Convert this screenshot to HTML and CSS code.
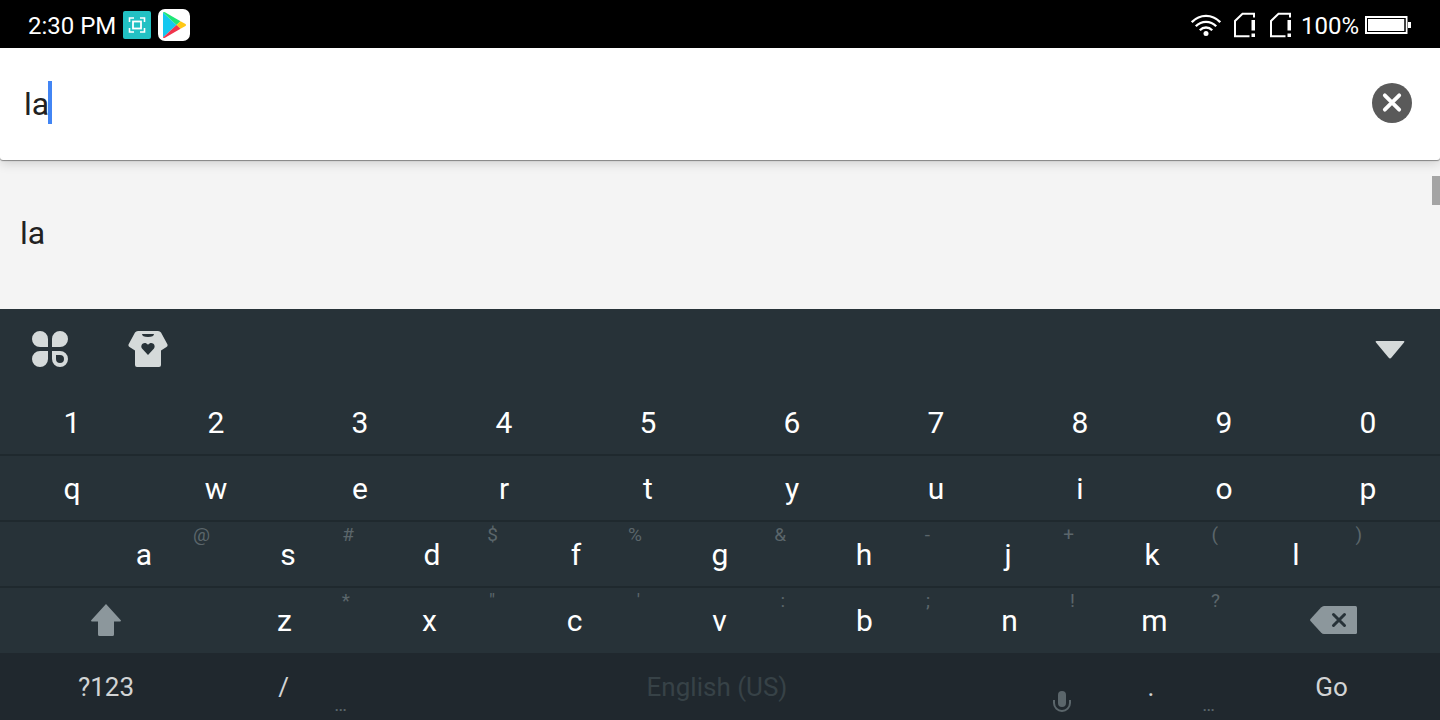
FILE: index.html
```html
<!DOCTYPE html>
<html lang="en">
<head>
<meta charset="utf-8">
<meta name="viewport" content="width=device-width, initial-scale=1">
<title>Search</title>
<link rel="stylesheet" href="styles.css">
</head>
<body>
<div class="screen">
  <header class="status">
    <div class="status-left">
      <span>2:30 PM</span>
      <svg width="28" height="28" viewBox="0 0 28 28" aria-hidden="true">
        <rect width="28" height="28" rx="2" fill="#22c1c3"/>
        <g fill="none" stroke="#fff" stroke-width="1.6"><path d="M6.5 11V7H11M17 7h4.500V11M21.500 17v4H17M11 21H6.500V17"/><rect x="10" y="10.500" width="8" height="7" stroke-width="1.800"/></g>
      </svg>
      <svg width="32" height="32" viewBox="0 0 32 32" aria-hidden="true">
        <rect width="32" height="32" rx="7" fill="#fff"/>
        <path d="M5 3.500V28.500L18.500 16Z" fill="#14c8f0"/>
        <path d="M5 3.500Q5.500 2.500 7 3.300L22.500 12.200L18.500 16Z" fill="#1ee676"/>
        <path d="M22.500 12.200L27.500 15Q28.800 16 27.500 17L22.500 19.800L18.500 16Z" fill="#ffc814"/>
        <path d="M5 28.500Q5.500 29.500 7 28.700L22.500 19.800L18.500 16Z" fill="#f0344c"/>
      </svg>
    </div>
    <div class="status-right">
      <svg width="30" height="24" viewBox="0 0 30 24" aria-hidden="true">
        <g fill="none" stroke="#fff" stroke-width="2.300"><path d="M.8 9.200C9 .8 21 .8 29.200 9.200"/><path d="M4.800 13.300C10.600 7.300 19.400 7.300 25.200 13.300"/><path d="M8.800 17.200C12.400 13.600 17.600 13.600 21.200 17.200"/></g>
        <circle cx="15" cy="20.500" r="2.500" fill="#fff"/>
      </svg>
      <svg width="24" height="26" viewBox="0 0 24 26" aria-hidden="true">
        <path d="M16.500 24.200H2V9L9.500 1.800H21V5.500" fill="none" stroke="#fff" stroke-width="2"/><path d="M18.500 8h3.500v10.500h-3.500zM18.500 21.500h3.500v3.500h-3.500z" fill="#fff"/>
      </svg>
      <svg width="24" height="26" viewBox="0 0 24 26" aria-hidden="true">
        <path d="M16.500 24.200H2V9L9.500 1.800H21V5.500" fill="none" stroke="#fff" stroke-width="2"/><path d="M18.500 8h3.500v10.500h-3.500zM18.500 21.500h3.500v3.500h-3.500z" fill="#fff"/>
      </svg>
      <span class="charge">100%
      <svg width="46" height="18" viewBox="0 0 46 18" aria-hidden="true">
        <rect x="1" y="1" width="40.500" height="16" fill="none" stroke="#fff" stroke-width="2"/><rect x="3" y="3" width="36.500" height="12" fill="#fff"/><rect x="2.500" y="2.500" width="37.500" height="13" fill="none" stroke="#000"/><path d="M43 6h3v6h-3z" fill="#fff"/>
      </svg></span>
    </div>
  </header>

  <div class="page">
    <form class="search">
      <input class="query" type="text" value="la" size="2" aria-label="Search">
      <span class="caret"></span>
      <button class="clear" type="reset" aria-label="Clear">
        <svg width="40" height="40" viewBox="0 0 40 40"><circle cx="20" cy="20" r="20" fill="#5a5a5a"/><path d="M12.800 12.300L27.200 26.700M27.200 12.300L12.800 26.700" stroke="#fff" stroke-width="3.800" stroke-linecap="round"/></svg>
      </button>
    </form>

    <main class="results">
      <button class="suggestion" type="button">la</button>
      <span class="scroll-thumb"></span>
    </main>
  </div>

  <section class="keyboard" aria-label="Keyboard">
    <div class="tools">
      <button type="button" aria-label="Menu">
        <svg width="36" height="36" viewBox="0 0 36 36" fill="#d5dada"><path d="M8 0a8 8 0 0 1 8 8v8H8A8 8 0 0 1 8 0zM28 0a8 8 0 0 1 0 16h-8V8a8 8 0 0 1 8-8zM8 20h8v8a8 8 0 1 1-8-8z"/><path fill-rule="evenodd" d="M20 20h8a8 8 0 1 1-8 8zM24 24v4a4 4 0 1 0 4-4z"/></svg>
      </button>
      <button type="button" aria-label="Themes">
        <svg width="40" height="36" viewBox="0 0 40 36"><path d="M10 0H30Q32 0 33 1.500L39.500 13.500Q40 15 38.500 16L33 19.500V34Q33 36 31 36H9Q7 36 7 34V19.500L1.500 16Q0 15 .5 13.500L7 1.500Q8 0 10 0Z" fill="#d5dada"/><path d="M14 3h12q0 3-6 3t-6-3zM20 24l-6-6.500c-2.500-3.500 2.500-8 6-3.700 3.500-4.300 8.500.2 6 3.700z" fill="#273238"/></svg>
      </button>
      <button class="collapse" type="button" aria-label="Hide keyboard">
        <svg width="30" height="18" viewBox="0 0 30 18"><path d="M1.500 0h27Q30 0 29 1.500L16.500 16.500Q15 18.500 13.500 16.500L1 1.500Q0 0 1.500 0z" fill="#d5dada"/></svg>
      </button>
    </div>

    <div class="row ten">
      <button type="button">1</button><button type="button">2</button><button type="button">3</button><button type="button">4</button><button type="button">5</button><button type="button">6</button><button type="button">7</button><button type="button">8</button><button type="button">9</button><button type="button">0</button>
    </div>
    <div class="row ten">
      <button type="button">q</button><button type="button">w</button><button type="button">e</button><button type="button">r</button><button type="button">t</button><button type="button">y</button><button type="button">u</button><button type="button">i</button><button type="button">o</button><button type="button">p</button>
    </div>
    <div class="row nine">
      <button type="button">a<span class="hint">@</span></button><button type="button">s<span class="hint">#</span></button><button type="button">d<span class="hint">$</span></button><button type="button">f<span class="hint">%</span></button><button type="button">g<span class="hint">&amp;</span></button><button type="button">h<span class="hint">-</span></button><button type="button">j<span class="hint">+</span></button><button type="button">k<span class="hint">(</span></button><button type="button">l<span class="hint">)</span></button>
    </div>
    <div class="row seven">
      <button type="button" aria-label="Shift"><svg width="30" height="32" viewBox="0 0 30 32"><path d="M15 0L30 16.500Q30 17.500 29 17.500H23V30.500Q23 32 21.500 32H8.500Q7 32 7 30.500V17.500H1Q0 17.500 0 16.500Z" fill="#8c979c"/></svg></button>
      <button type="button">z<span class="hint">*</span></button><button type="button">x<span class="hint">"</span></button><button type="button">c<span class="hint">'</span></button><button type="button">v<span class="hint">:</span></button><button type="button">b<span class="hint">;</span></button><button type="button">n<span class="hint">!</span></button><button type="button">m<span class="hint">?</span></button>
      <button type="button" aria-label="Backspace"><svg width="47" height="28" viewBox="0 0 47 28"><path d="M14 0H45.500Q47 0 47 1.500V26.500Q47 28 45.500 28H14Q12.500 28 11 26.500L.5 15Q-.3 14 .5 13L11 1.500Q12.500 0 14 0Z" fill="#8c979c"/><path d="M23.500 8.500L34.500 19.500M34.500 8.500L23.500 19.500" stroke="#273238" stroke-width="3" stroke-linecap="round"/></svg></button>
    </div>
    <div class="row bottom">
      <button type="button">?123</button>
      <button type="button">/<span class="hint">…</span></button>
      <button class="space" type="button">English (US)<span class="hint"><svg width="18" height="21" viewBox="0 0 18 21"><rect x="5" width="8" height="16" rx="4" fill="#5b666b"/><path d="M1 9v3a8 8 0 0 0 16 0V9" fill="none" stroke="#5b666b" stroke-width="2"/></svg></span></button>
      <button type="button">.<span class="hint">…</span></button>
      <button type="button">Go</button>
    </div>
  </section>
</div>
</body>
</html>
```
FILE: styles.css
```css
* { box-sizing: border-box; }

body {
  margin: 0;
  background: #273238;
  font-family: Roboto, "Liberation Sans", sans-serif;
}

button, input {
  margin: 0;
  padding: 0;
  border: 0;
  background: none;
  color: inherit;
  font: inherit;
  outline: none;
}

svg { display: block; }

.screen {
  display: flex;
  flex-direction: column;
  min-height: 100vh;
}

.status {
  display: flex;
  justify-content: space-between;
  align-items: center;
  height: 48px;
  padding: 3px 29px 0 28px;
  background: #000;
  color: #fff;
  font-size: 24px;
}

.status-left, .status-right, .charge {
  display: flex;
  align-items: center;
}

.status svg { margin-bottom: 2px; }
.status-left { gap: 7px; }
.status-right { gap: 12px; }
.status-right > .charge { margin-left: -4px; }
.charge { gap: 6px; }

.page {
  flex: 1;
  display: flex;
  flex-direction: column;
  background: #f4f4f4;
  color: #212121;
  font-size: 32px;
}

.search {
  position: relative;
  z-index: 1;
  display: flex;
  align-items: center;
  height: 112px;
  padding: 0 28px 0 24px;
  border-radius: 0 0 3px 3px;
  background: #fff;
  box-shadow: 0 1px 1px rgba(0, 0, 0, 0.4), 0 3px 12px rgba(0, 0, 0, 0.16);
}

.query {
  field-sizing: content;
  height: 44px;
}

.caret {
  width: 4px;
  height: 43px;
  margin: 0 0 4px -1px;
  background: #4285f4;
}

.clear { margin: 0 0 2px auto; }

.results {
  position: relative;
  flex: 1;
  display: flex;
  flex-direction: column;
  justify-content: center;
  padding-bottom: 4px;
}

.suggestion {
  padding: 0 20px;
  text-align: left;
}

.scroll-thumb {
  position: absolute;
  top: 16px;
  right: 0;
  width: 8px;
  height: 29px;
  background: #a4a4a4;
}

.keyboard {
  background: #273238;
  color: #fff;
  font-size: 30px;
}

.tools {
  display: flex;
  align-items: center;
  gap: 60px;
  height: 81px;
  padding: 0 35px 2px 32px;
}

.collapse { margin: 2px 0 0 auto; }

.row {
  display: grid;
  height: 66px;
}

.ten { grid-template-columns: repeat(10, 1fr); }

.nine {
  grid-template-columns: repeat(9, 1fr);
  padding: 0 5%;
}

.seven { grid-template-columns: 212fr repeat(7, 145fr) 213fr; }

.row + .row { box-shadow: 0 -2px 0 #1f292e; }

.row button {
  position: relative;
  display: flex;
  align-items: center;
  justify-content: center;
  padding-bottom: 2px;
}

.hint {
  position: absolute;
  top: 1px;
  right: 6px;
  color: #5b666b;
  font-size: 19px;
}

.seven .hint { right: 7px; }

.row.bottom {
  grid-template-columns: 212fr 143fr 724fr 144fr 217fr;
  background: #20282e;
  color: #d2d4d5;
  font-size: 26px;
  box-shadow: 0 -1px 0 #20282e;
}

.row.bottom button { padding-bottom: 0; }

.row.bottom .space { color: #374247; }

.bottom .hint {
  top: auto;
  bottom: 4px;
  right: 8px;
}

.space .hint {
  right: 8px;
  bottom: 8px;
}
```
